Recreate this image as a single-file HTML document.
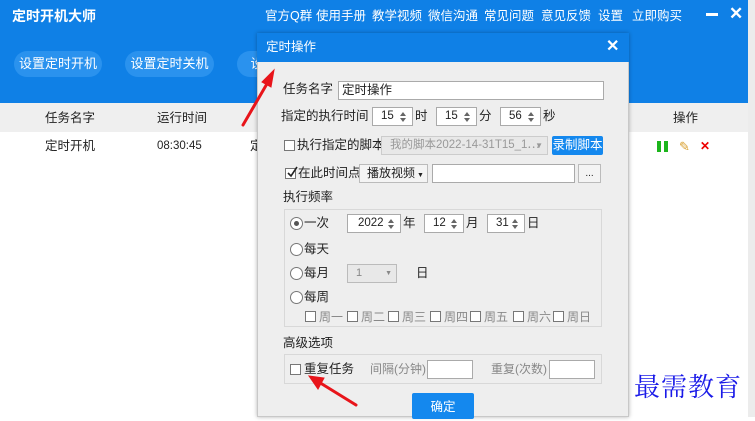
<!DOCTYPE html><html><head><meta charset="utf-8"><style>
*{box-sizing:border-box;margin:0;padding:0}
body{width:755px;height:417px;overflow:hidden;background:#fff;font-family:"Liberation Sans","Noto Sans CJK SC",sans-serif;font-size:12px;color:#222;position:relative;line-height:15px}
.a{position:absolute;white-space:nowrap}
.hdr{left:0;top:0;width:750px;height:103px;background:#0f80e6}
.pill{background:#2a92ee;color:#fff;border-radius:13px;height:26px;line-height:26px;font-size:13px;text-align:center}
.nav{color:#fff;font-size:12.5px;top:9px}
.inp{background:#fff;border:1px solid #aaa;height:19px}
.spin{background:#fff;border:1px solid #aaa;height:19px;font-size:11.5px;line-height:17px;padding-left:8px}
.spin:after{content:"";position:absolute;right:6px;top:4px;border:3px solid transparent;border-bottom:4px solid #666;border-top:0}
.spin:before{content:"";position:absolute;right:6px;top:10px;border:3px solid transparent;border-top:4px solid #666;border-bottom:0}
.cb{width:11px;height:11px;border:1px solid #777;background:#fff}
.rd{width:13px;height:13px;border:1px solid #777;border-radius:50%;background:#fff}
.grp{border:1px solid #d8d8d8}
.wd{color:#888}
</style></head><body>
<div class="a hdr"></div>
<div class="a" style="left:12px;top:9px;color:#fff;font-size:14px;font-weight:bold">定时开机大师</div>
<div class="a nav" style="left:265px">官方Q群</div>
<div class="a nav" style="left:316px">使用手册</div>
<div class="a nav" style="left:372px">教学视频</div>
<div class="a nav" style="left:428px">微信沟通</div>
<div class="a nav" style="left:484px">常见问题</div>
<div class="a nav" style="left:541px">意见反馈</div>
<div class="a nav" style="left:598px">设置</div>
<div class="a nav" style="left:632px">立即购买</div>
<div class="a" style="left:706px;top:13px;width:12px;height:3px;background:#fff"></div>
<div class="a" style="left:729px;top:6px;color:#fff;font-size:17px;font-weight:bold">✕</div>
<div class="a pill" style="left:14px;top:51px;width:88px">设置定时开机</div>
<div class="a pill" style="left:125px;top:51px;width:89px">设置定时关机</div>
<div class="a pill" style="left:237px;top:51px;width:40px">设</div>
<div class="a" style="left:0;top:103px;width:750px;height:29px;background:#efefef"></div>
<div class="a" style="left:45px;top:111px;font-size:12.5px">任务名字</div>
<div class="a" style="left:157px;top:111px;font-size:12.5px">运行时间</div>
<div class="a" style="left:673px;top:111px;font-size:12.5px">操作</div>
<div class="a" style="left:45px;top:139px;font-size:12.5px">定时开机</div>
<div class="a" style="left:157px;top:139px;font-size:11.5px">08:30:45</div>
<div class="a" style="left:250px;top:139px;font-size:12.5px">定</div>
<div class="a" style="left:657px;top:141px;width:4px;height:11px;background:#1cb51c"></div>
<div class="a" style="left:664px;top:141px;width:4px;height:11px;background:#1cb51c"></div>
<div class="a" style="left:679px;top:139px;font-size:13px;color:#d9a030">✎</div>
<div class="a" style="left:700px;top:139px;font-size:12px;color:#e00;font-weight:bold">✕</div>
<div class="a" style="left:748px;top:0;width:7px;height:417px;background:#ececec"></div>

<div class="a" style="left:257px;top:33px;width:372px;height:384px;background:#eeeeee;border:1px solid #c8c8c8;box-shadow:0 0 4px rgba(0,0,0,.3)"></div>
<div class="a" style="left:257px;top:33px;width:372px;height:29px;background:#0f80e6"></div>
<div class="a" style="left:266px;top:40px;color:#fff;font-size:12.5px">定时操作</div>
<div class="a" style="left:606px;top:39px;color:#fff;font-size:16px;font-weight:bold">✕</div>

<div class="a" style="left:283px;top:82px;font-size:12.5px">任务名字</div>
<div class="a inp" style="left:338px;top:81px;width:266px;font-size:12.5px;padding-left:3px;line-height:17px">定时操作</div>
<div class="a" style="left:281px;top:109px;font-size:12.5px">指定的执行时间</div>
<div class="a spin" style="left:372px;top:107px;width:41px">15</div><div class="a" style="left:415px;top:109px;font-size:12.5px">时</div>
<div class="a spin" style="left:436px;top:107px;width:41px">15</div><div class="a" style="left:479px;top:109px;font-size:12.5px">分</div>
<div class="a spin" style="left:500px;top:107px;width:41px">56</div><div class="a" style="left:543px;top:109px;font-size:12.5px">秒</div>

<div class="a cb" style="left:284px;top:140px"></div>
<div class="a" style="left:297px;top:138px;font-size:12.5px">执行指定的脚本</div>
<div class="a" style="left:381px;top:136px;width:167px;height:19px;border:1px solid #ccc;background:#e8e8e8;color:#999;font-size:11.5px;line-height:17px;padding-left:8px">我的脚本2022-14-31T15_1⋯ <span style="position:absolute;right:4px;font-size:8px">▼</span></div>
<div class="a" style="left:552px;top:136px;width:51px;height:19px;background:#1488ee;color:#fff;font-size:12.5px;line-height:19px;text-align:center;border-radius:2px">录制脚本</div>

<div class="a cb" style="left:285px;top:168px"></div>
<svg class="a" style="left:285px;top:165px" width="14" height="14"><path d="M3 8 L6 11 L12 2" stroke="#222" stroke-width="1.6" fill="none"/></svg>
<div class="a" style="left:298px;top:166px;font-size:12.5px">在此时间点</div>
<div class="a" style="left:359px;top:164px;width:69px;height:19px;border:1px solid #bbb;background:#f4f4f4;font-size:12px;line-height:17px;padding-left:7px">播放视频<span style="font-size:7px"> ▼</span></div>
<div class="a inp" style="left:432px;top:164px;width:143px"></div>
<div class="a" style="left:578px;top:164px;width:23px;height:19px;border:1px solid #bbb;background:#f4f4f4;text-align:center;font-size:10px;line-height:17px">...</div>

<div class="a" style="left:283px;top:190px;font-size:12.5px">执行频率</div>
<div class="a grp" style="left:284px;top:209px;width:318px;height:118px"></div>
<div class="a rd" style="left:290px;top:217px"></div><div class="a" style="left:294px;top:221px;width:5px;height:5px;border-radius:50%;background:#555"></div>
<div class="a" style="left:304px;top:216px;font-size:12.5px">一次</div>
<div class="a spin" style="left:347px;top:214px;width:54px;padding-left:10px">2022</div><div class="a" style="left:403px;top:216px;font-size:12.5px">年</div>
<div class="a spin" style="left:424px;top:214px;width:40px">12</div><div class="a" style="left:466px;top:216px;font-size:12.5px">月</div>
<div class="a spin" style="left:487px;top:214px;width:38px">31</div><div class="a" style="left:527px;top:216px;font-size:12.5px">日</div>
<div class="a rd" style="left:290px;top:243px"></div><div class="a" style="left:304px;top:242px;font-size:12.5px">每天</div>
<div class="a rd" style="left:290px;top:267px"></div><div class="a" style="left:304px;top:266px;font-size:12.5px">每月</div>
<div class="a" style="left:347px;top:264px;width:50px;height:19px;border:1px solid #bbb;background:#e8e8e8;color:#888;font-size:11px;line-height:17px;padding-left:8px">1<span style="position:absolute;right:4px;font-size:7px">▼</span></div>
<div class="a" style="left:416px;top:266px;font-size:12.5px">日</div>
<div class="a rd" style="left:290px;top:291px"></div><div class="a" style="left:304px;top:290px;font-size:12.5px">每周</div>
<div class="a cb" style="left:305px;top:311px"></div><div class="a wd" style="left:319px;top:310px">周一</div>
<div class="a cb" style="left:347px;top:311px"></div><div class="a wd" style="left:361px;top:310px">周二</div>
<div class="a cb" style="left:388px;top:311px"></div><div class="a wd" style="left:402px;top:310px">周三</div>
<div class="a cb" style="left:430px;top:311px"></div><div class="a wd" style="left:444px;top:310px">周四</div>
<div class="a cb" style="left:470px;top:311px"></div><div class="a wd" style="left:484px;top:310px">周五</div>
<div class="a cb" style="left:513px;top:311px"></div><div class="a wd" style="left:527px;top:310px">周六</div>
<div class="a cb" style="left:553px;top:311px"></div><div class="a wd" style="left:567px;top:310px">周日</div>

<div class="a" style="left:283px;top:336px;font-size:12.5px">高级选项</div>
<div class="a grp" style="left:284px;top:354px;width:318px;height:30px"></div>
<div class="a cb" style="left:290px;top:364px"></div>
<div class="a" style="left:304px;top:362px;font-size:12.5px">重复任务</div>
<div class="a wd" style="left:370px;top:362px">间隔(分钟)</div>
<div class="a inp" style="left:427px;top:360px;width:46px"></div>
<div class="a wd" style="left:491px;top:362px">重复(次数)</div>
<div class="a inp" style="left:549px;top:360px;width:46px"></div>
<div class="a" style="left:412px;top:393px;width:62px;height:26px;background:#1488ee;color:#fff;font-size:12.5px;text-align:center;line-height:28px;border-radius:2px">确定</div>

<svg class="a" style="left:0;top:0" width="755" height="417">
<g stroke="#e8141a" stroke-width="3" fill="#e8141a" stroke-linecap="round">
<line x1="243" y1="125" x2="268" y2="82"/><polygon points="274,70 262,82 271,87" stroke-width="1"/>
<line x1="356" y1="405" x2="322" y2="384"/><polygon points="309,376 324,378 318,389" stroke-width="1"/>
</g></svg>
<div class="a" style="left:634px;top:371px;font-size:26px;line-height:30px;color:#1a1ae8;font-family:'Noto Serif CJK SC',serif;letter-spacing:1px">最需教育</div>
</body></html>
